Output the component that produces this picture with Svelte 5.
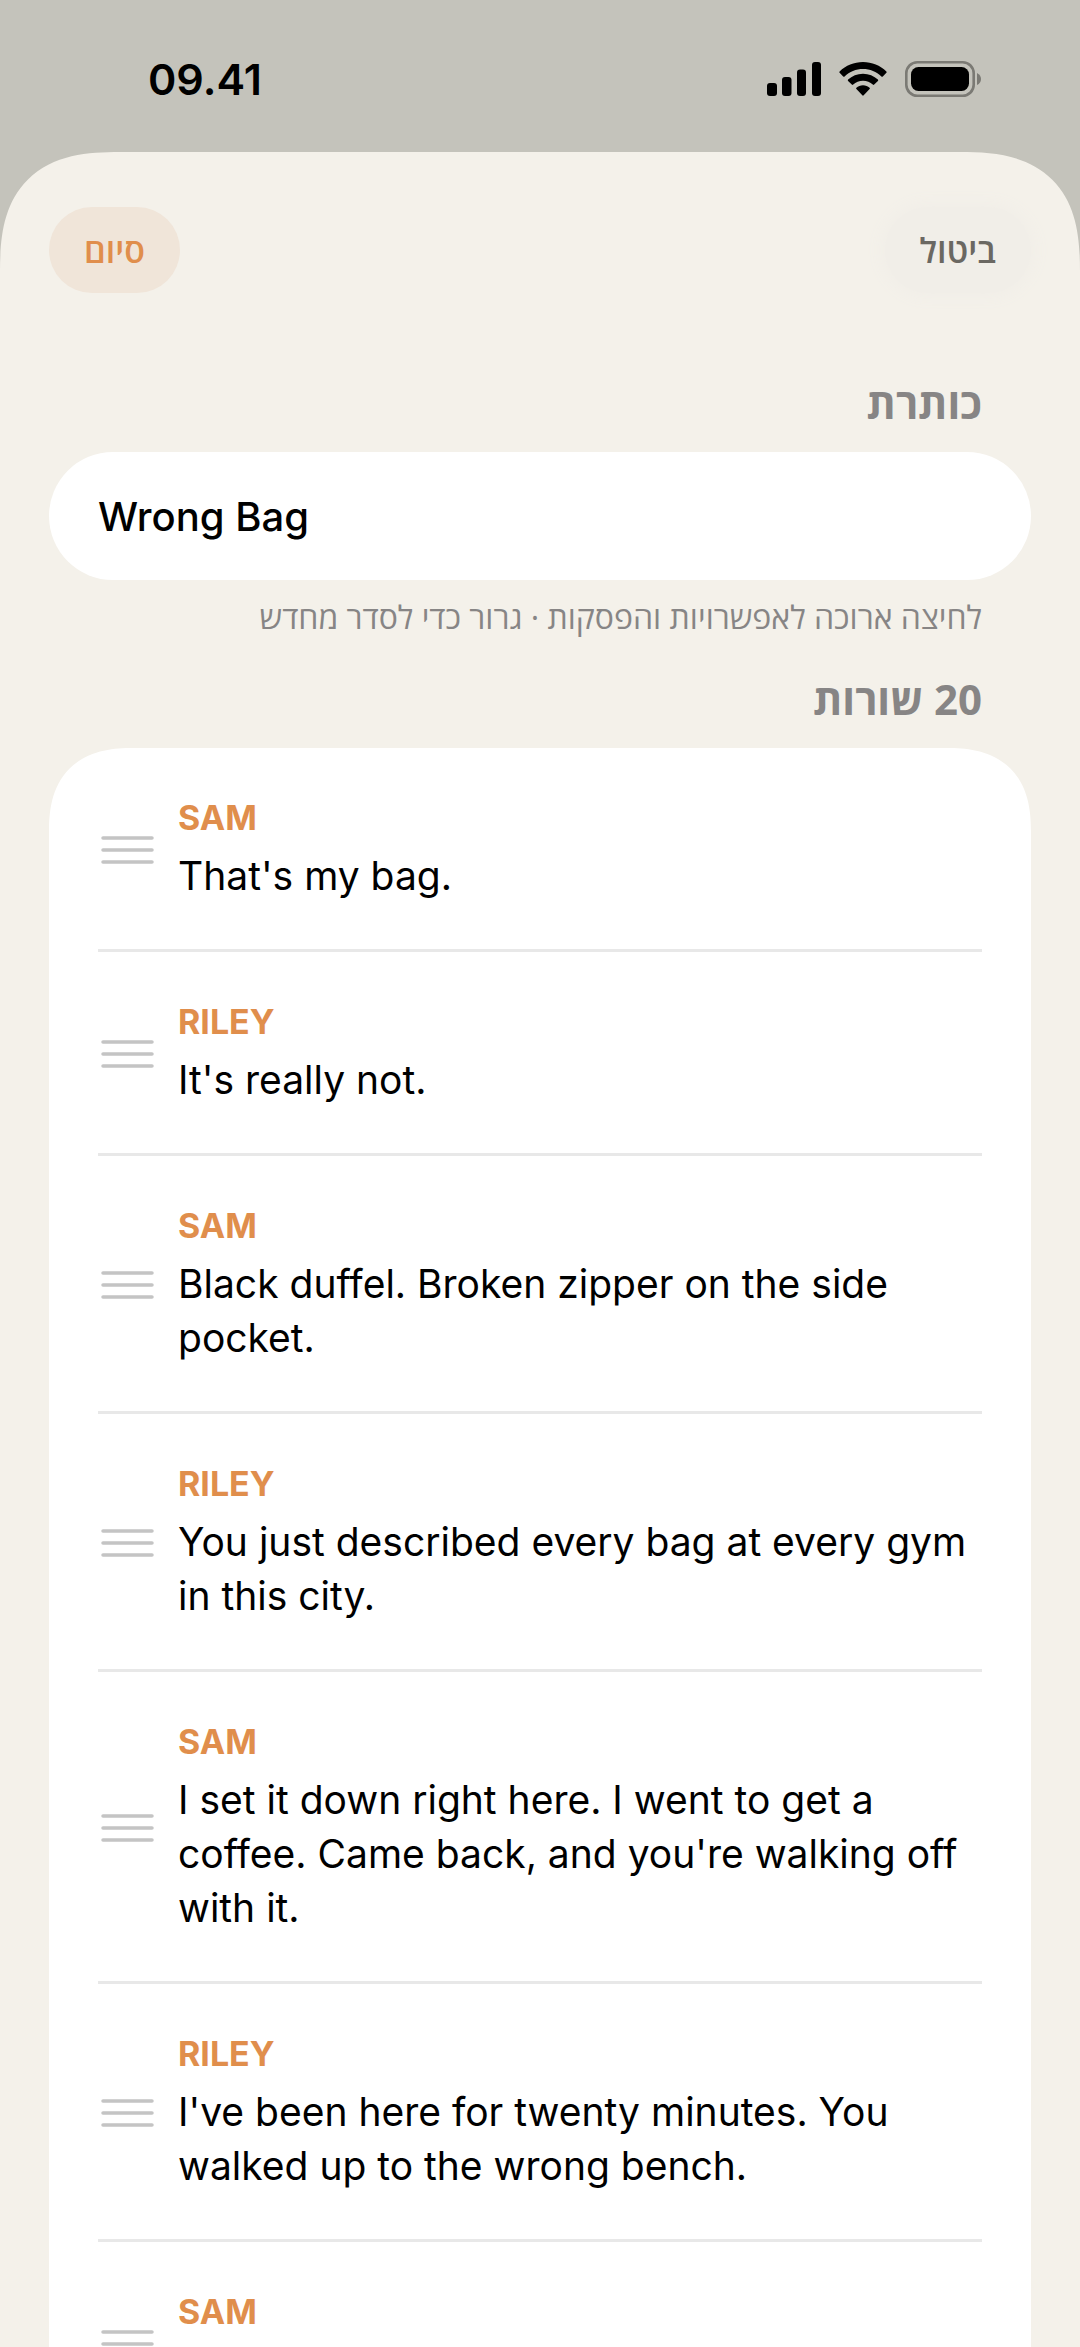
<script lang="ts">
  type Line = { speaker: string; text: string };

  let title = $state('Wrong Bag');

  const lines: Line[] = [
    { speaker: 'SAM', text: "That's my bag." },
    { speaker: 'RILEY', text: "It's really not." },
    { speaker: 'SAM', text: 'Black duffel. Broken zipper on the side pocket.' },
    { speaker: 'RILEY', text: 'You just described every bag at every gym in this city.' },
    { speaker: 'SAM', text: "I set it down right here. I went to get a coffee. Came back, and you're walking off with it." },
    { speaker: 'RILEY', text: "I've been here for twenty minutes. You walked up to the wrong bench." },
    { speaker: 'SAM', text: '' }
  ];
</script>

<div class="screen" dir="rtl" lang="he">
  <div class="status" dir="ltr">
    <span class="time">09.41</span>
    <div class="indicators">
      <svg width="54" height="36" viewBox="0 0 54 36" aria-hidden="true">
        <rect x="0" y="22" width="10" height="13" rx="3" />
        <rect x="15" y="16" width="9.5" height="19" rx="3" />
        <rect x="30" y="8.500" width="9" height="26.500" rx="3" />
        <rect x="45" y="1" width="9" height="34" rx="3" />
      </svg>
      <svg width="48" height="36" viewBox="0 0 48 36" aria-hidden="true">
        <path d="M24 1C33 1 41.200 4.500 47.400 10.400Q48 11 47.400 11.700L43.800 15.400Q43.100 16 42.400 15.400C37.500 10.800 31 8.100 24 8.100S10.500 10.800 5.600 15.400Q4.900 16 4.200 15.400L.6 11.700Q0 11 .6 10.400C6.800 4.500 15 1 24 1Z" />
        <path d="M24 12.700C29.800 12.700 35 14.900 38.900 18.600Q39.600 19.300 38.900 20L35.200 23.600Q34.500 24.200 33.800 23.600C31.200 21.300 27.800 19.800 24 19.800S16.800 21.300 14.200 23.600Q13.500 24.200 12.800 23.600L9.100 20Q8.400 19.300 9.100 18.600C13 14.900 18.200 12.700 24 12.700Z" />
        <path d="M24 24.300C26.600 24.300 28.800 25.200 30.600 26.700Q31.300 27.400 30.600 28.100L24.700 34.300Q24 35 23.300 34.300L17.400 28.100Q16.700 27.400 17.400 26.700C19.200 25.200 21.400 24.300 24 24.300Z" />
      </svg>
      <svg width="77" height="36" viewBox="0 0 77 36" aria-hidden="true">
        <rect x="1.300" y="1.300" width="67.400" height="33.400" rx="11" fill="none" stroke="#7b7a74" stroke-width="2.600" />
        <rect x="6" y="6" width="58" height="24" rx="7.500" />
        <path d="M72 12Q76 14 76 18T72 24Z" fill="#7b7a74" />
      </svg>
    </div>
  </div>

  <main class="sheet">
    <header class="toolbar">
      <button type="button" class="cancel">ביטול</button>
      <button type="button" class="done">סיום</button>
    </header>

    <label class="heading" for="title">כותרת</label>
    <input id="title" class="field" type="text" dir="ltr" bind:value={title} />
    <p class="hint">לחיצה ארוכה לאפשרויות והפסקות · גרור כדי לסדר מחדש</p>

    <h2 class="heading">20 שורות</h2>
    <ul class="card" dir="ltr" lang="en">
      {#each lines as line}
        <li class="row">
          <button type="button" class="handle" aria-label="Reorder">
            <svg width="53" height="28" viewBox="0 0 53 28" aria-hidden="true">
              <path d="M2 2H51M2 14H51M2 26H51" stroke="#c4c4c4" stroke-width="3.500" stroke-linecap="round" />
            </svg>
          </button>
          <div class="copy">
            <span class="speaker">{line.speaker}</span>
            <p class="text">{line.text}</p>
          </div>
        </li>
      {/each}
    </ul>
  </main>
</div>

<style>
  :global(body) {
    background: #c4c3bb;
  }

  .screen {
    display: flex;
    flex-direction: column;
    height: 100vh;
    overflow: hidden;
    background: #c4c3bb;
    color: #000;
    font-family: Inter, 'Open Sans', sans-serif;
  }

  .status {
    display: flex;
    flex: none;
    align-items: center;
    justify-content: space-between;
    height: 152px;
    padding: 6px 98px 0 148px;
    box-sizing: border-box;
  }

  .time {
    font-size: 43px;
    font-weight: 600;
    line-height: 54px;
  }

  .indicators {
    display: flex;
    align-items: center;
    gap: 18px;
  }

  .sheet {
    flex: 1;
    min-height: 0;
    padding: 55px 49px 0;
    border-radius: 120px 120px 0 0;
    corner-shape: superellipse(1.4);
    background: #f4f1ea;
  }

  .toolbar {
    display: flex;
    justify-content: space-between;
    margin-bottom: 80px;
  }

  button {
    border: 0;
    font-family: inherit;
    cursor: pointer;
  }

  .toolbar button {
    height: 86px;
    padding: 0 35px;
    border-radius: 43px;
    font-family: 'Open Sans', sans-serif;
    font-size: 34px;
    font-weight: 600;
  }

  .toolbar .cancel {
    background: #f1eee8;
    color: #6b6862;
    box-shadow: 0 0 16px 4px #f1eee8;
  }

  .toolbar .done {
    background: #f0e5d9;
    color: #e08e4c;
  }

  .heading {
    display: block;
    margin: 0;
    padding: 0 49px;
    color: #878585;
    font-family: 'Open Sans', sans-serif;
    font-size: 42px;
    font-weight: 700;
    line-height: 60px;
  }

  .field {
    display: block;
    width: 100%;
    height: 128px;
    margin: 19px 0 15px;
    padding: 0 49px;
    box-sizing: border-box;
    border: 0;
    border-radius: 64px;
    outline: 0;
    background: #fff;
    color: #000;
    font-family: inherit;
    font-size: 40px;
    font-weight: 500;
  }

  .hint {
    margin: 0 0 30px;
    padding: 0 49px;
    color: #878585;
    font-family: 'Open Sans', sans-serif;
    font-size: 32px;
    line-height: 44px;
  }

  .card {
    margin: 19px 0 0;
    padding: 0 49px;
    border-radius: 84px 84px 0 0;
    corner-shape: superellipse(1.3);
    background: #fff;
    list-style: none;
  }

  .row {
    display: flex;
    align-items: center;
    gap: 24px;
    padding: 49px 0 46px;
    border-bottom: 3px solid #e8e8e8;
  }

  .handle {
    display: flex;
    flex: none;
    padding: 0 0 0 3px;
    background: none;
  }

  .copy {
    flex: 1;
    min-width: 0;
  }

  .speaker {
    display: block;
    margin-bottom: 10px;
    color: #e08e4c;
    font-size: 34px;
    font-weight: 700;
    line-height: 42px;
  }

  .text {
    min-height: 54px;
    margin: 0;
    font-size: 39px;
    line-height: 54px;
  }
</style>
